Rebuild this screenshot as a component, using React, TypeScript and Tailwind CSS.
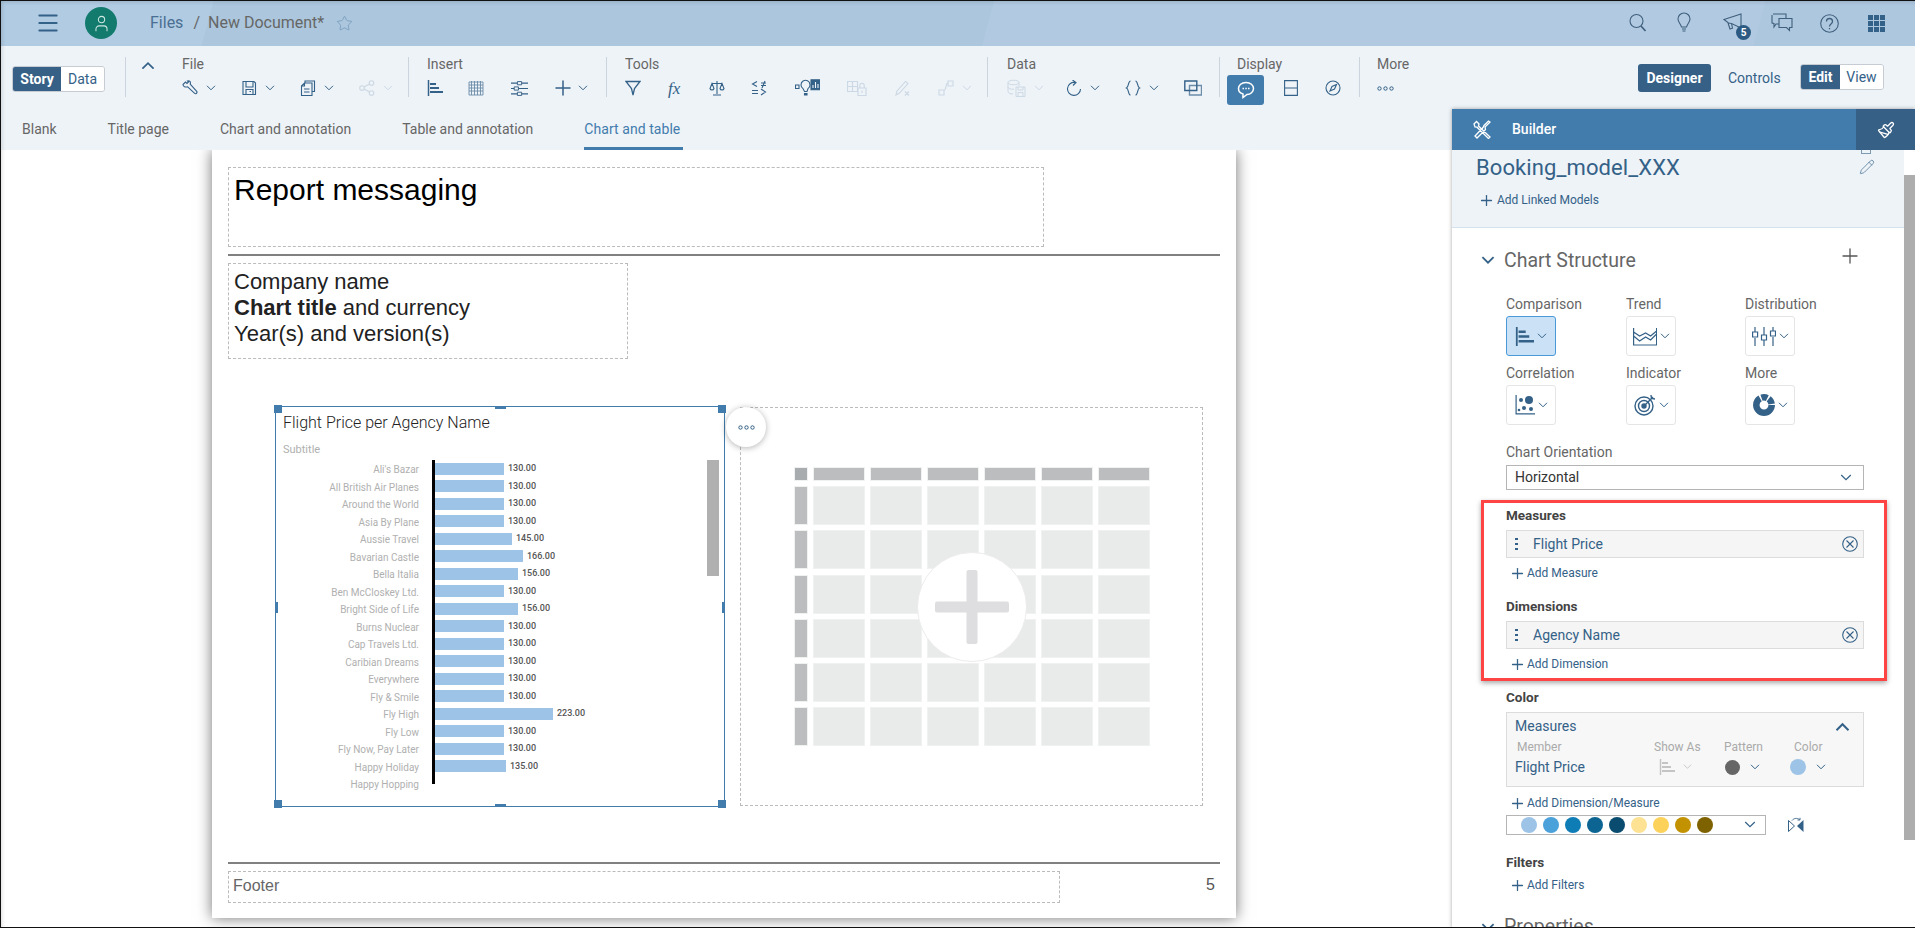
import type { ReactNode } from "react";
import { Menu, Paintbrush, Pencil, Plus, Star, User } from "lucide-react";

const bars = [
  { name: "Ali's Bazar", width: 69, value: "130.00" },
  { name: "All British Air Planes", width: 69, value: "130.00" },
  { name: "Around the World", width: 69, value: "130.00" },
  { name: "Asia By Plane", width: 69, value: "130.00" },
  { name: "Aussie Travel", width: 77, value: "145.00" },
  { name: "Bavarian Castle", width: 88, value: "166.00" },
  { name: "Bella Italia", width: 83, value: "156.00" },
  { name: "Ben McCloskey Ltd.", width: 69, value: "130.00" },
  { name: "Bright Side of Life", width: 83, value: "156.00" },
  { name: "Burns Nuclear", width: 69, value: "130.00" },
  { name: "Cap Travels Ltd.", width: 69, value: "130.00" },
  { name: "Caribian Dreams", width: 69, value: "130.00" },
  { name: "Everywhere", width: 69, value: "130.00" },
  { name: "Fly & Smile", width: 69, value: "130.00" },
  { name: "Fly High", width: 118, value: "223.00" },
  { name: "Fly Low", width: 69, value: "130.00" },
  { name: "Fly Now, Pay Later", width: 69, value: "130.00" },
  { name: "Happy Holiday", width: 71, value: "135.00" },
  { name: "Happy Hopping", width: 0, value: "" },
];

const palette = [
  "#9dc3e6",
  "#4ba1d9",
  "#0f7db5",
  "#0b6492",
  "#0a4c6f",
  "#fde293",
  "#fcd25a",
  "#c29200",
  "#7f6200",
];

const Svg = ({ size = 16, children }: { size?: number; children: ReactNode }) => (
  <svg
    width={size}
    height={size}
    viewBox="0 0 16 16"
    fill="none"
    stroke="currentColor"
    strokeWidth="1.1"
    className="shrink-0"
  >
    {children}
  </svg>
);

const Chev = ({ up = false, size = 10, weight = 1 }: { up?: boolean; size?: number; weight?: number }) => (
  <svg width={size} height={size * 0.6} viewBox="0 0 10 6" fill="none" stroke="currentColor" strokeWidth={weight} className="shrink-0">
    <path d={up ? "M1 5.5 5 1.5l4 4" : "M1 .8 5 4.8l4-4"} />
  </svg>
);

const Dots = () => (
  <svg width="17" height="5" viewBox="0 0 17 5" fill="none" stroke="currentColor" strokeWidth="1" className="shrink-0">
    <circle cx="2.500" cy="2.500" r="1.700" />
    <circle cx="8.500" cy="2.500" r="1.700" />
    <circle cx="14.500" cy="2.500" r="1.700" />
  </svg>
);

const BarIcon = ({ size = 16 }: { size?: number }) => (
  <Svg size={size}>
    <path d="M1.500 0v16" strokeWidth="1.500" />
    <path d="M3 4h6M3 8h9M3 12h14" strokeWidth="2" />
  </Svg>
);
const WrenchIcon = () => (
  <Svg>
    <path d="M1 4.500 3.500 2 5 3.500 6.500 2 5.500 1C7.500.2 9 2 8.200 4.200l6.500 7.200c.9 1.300-.8 3-2 2L5.600 6.800C3.500 7.500 1 6.500 1 4.500Z" />
  </Svg>
);
const SaveIcon = () => (
  <Svg>
    <path d="M2 1.500h11l1.500 1.500v11.500h-12.500zM5 1.500v5.500h7v-5.500M5 14.500v-5h7v5M8.500 11.500h1.500" />
  </Svg>
);
const CopyIcon = () => (
  <Svg>
    <path d="M5 3V1h9.500v10.500H12M1.500 6 4.500 3h7.500v12.500H1.500zM4.500 3v3h-3M4 9h5.500M4 12h5.500" />
  </Svg>
);
const ShareIcon = () => (
  <Svg>
    <circle cx="3" cy="8" r="2.300" />
    <circle cx="12.500" cy="3" r="2.300" />
    <circle cx="12.500" cy="13" r="2.300" />
    <path d="m5 7 5.500-3M5 9l5.500 3" />
  </Svg>
);
const TableIcon = () => (
  <span className="opacity-70">
    <Svg>
      <path d="M1 2h14v13H1zM1 5h14M1 8h14M1 11h14M3.500 1v14M6.500 1v14M9.500 1v14M12.500 1v14" strokeWidth=".9" />
    </Svg>
  </span>
);
const SlidersIcon = () => (
  <Svg size={17}>
    <path d="M0 3h6M10 3h6M0 8h3M7 8h9M0 13h6M10 13h6" />
    <path d="M6 1.500h4v3H6zM3 6.500h4v3H3zM6 11.500h4v3H6z" strokeWidth=".9" />
  </Svg>
);
const FunnelIcon = () => (
  <Svg>
    <path d="M1 1.500h14L9.500 8.500 8 15l-1.500-6.500z" strokeWidth="1.300" />
  </Svg>
);
const ScaleIcon = () => (
  <Svg>
    <path d="M8 1v13M4 15h8M3 3.500h10M3 3.500 1 8.500c.5 2 3.500 2 4 0zM13 3.500l-2 5c.5 2 3.500 2 4 0z" />
  </Svg>
);
const CompareIcon = () => (
  <Svg>
    <path d="M6 1.500 1.500 4 6 6.500M10 3h5M10 5.500h5M14 1l-3 7M1 10.500h6M1 13.500h6M10 9l4.500 3-4.500 3" />
  </Svg>
);
const BulbChartIcon = () => (
  <svg width="25" height="18" viewBox="0 0 25 18" fill="none" stroke="currentColor" strokeWidth="1.100" className="shrink-0">
    <path d="M0.500 6h3.500v3.500H0.500zM6 6a4.500 4.500 0 1 1 7 3.600L12 12.500H9.500L8 9.600A4.500 4.500 0 0 1 6 6Z" />
    <path d="M9.500 14.500h2.500v1.500H9.500z" fill="currentColor" />
    <path d="M16 .8h8.500v10H16z" fill="currentColor" />
    <path d="M18 9V6M20.500 9V3M23 9V5" stroke="#eef3f8" />
  </svg>
);
const LockTableIcon = () => (
  <svg width="20" height="16" viewBox="0 0 20 16" fill="none" stroke="currentColor" strokeWidth="1.100" className="shrink-0">
    <path d="M.5 1.500h10v10H.5zM.5 6.500h10M5.500 1.500v10" />
    <path d="M11 8h8v7.500h-8zM12.800 8V5.500a2.200 2.200 0 0 1 4.400 0V8" fill="#eef3f8" />
    <path d="M15 10.500v2.500" />
  </svg>
);
const PenXIcon = () => (
  <Svg>
    <path d="M1 15l1-4L10.500 1.500l2.500 2L4.500 13zM10 11.500l4 4M14 11.500l-4 4" />
  </Svg>
);
const LinkIcon = () => (
  <Svg>
    <path d="M1 10h5v5H1zM10 1h5v5h-5zM6 10c3 0 1-7 4-7" />
  </Svg>
);
const DbIcon = () => (
  <svg width="19" height="18" viewBox="0 0 19 18" fill="none" stroke="currentColor" strokeWidth="1" className="shrink-0">
    <path d="M1 3.500C1 .5 12 .5 12 3.500S1 6.500 1 3.500ZM1 3.500v9C1 14 3 15 6 15M12 3.500V7M1 8c0 1.500 3 2.400 6 2.200" />
    <path d="M9 8h9v9.500H9zM11 8v3h5V8M11 17.500v-4h5v4" />
  </svg>
);
const RefreshIcon = () => (
  <Svg>
    <path d="M9 2.500A6.500 6.500 0 1 0 14.500 9M6.500 0 10 2.500 7 5.500" />
  </Svg>
);
const BracesIcon = () => (
  <Svg>
    <path d="M5.500 1C3 1 4 7 1.500 8 4 9 3 15 5.500 15M10.500 1C13 1 12 7 14.500 8 12 9 13 15 10.500 15" />
  </Svg>
);
const OverlapIcon = () => (
  <svg width="18" height="16" viewBox="0 0 18 16" fill="none" stroke="currentColor" className="shrink-0">
    <path d="M.8 1h12v9.500H.8z" strokeWidth="1.400" />
    <path d="M5.500 5.500h12V15h-12z" strokeWidth="1.400" opacity=".7" />
  </svg>
);
const CommentIcon = () => (
  <svg width="18" height="18" viewBox="0 0 18 18" fill="none" stroke="currentColor" strokeWidth="1.500">
    <path d="M9 1.500c4.500 0 7.500 2.700 7.500 6S13.500 13.500 10 13.500L6 16.500v-3.500C3 12.200 1.500 10 1.500 7.500c0-3.300 3-6 7.500-6Z" />
    <path d="M5.500 7.500h1.500M8.300 7.500h1.500M11 7.500h1.500" strokeWidth="1.700" />
  </svg>
);
const SplitIcon = () => (
  <svg width="14" height="16" viewBox="0 0 14 16" fill="none" stroke="currentColor" strokeWidth="1.100" className="shrink-0">
    <path d="M.6.600h12.800v14.800H.6zM.6 8h12.800" />
  </svg>
);
const CompassIcon = () => (
  <Svg>
    <circle cx="8" cy="8" r="7" />
    <path d="m11.500 4.500-4.500 2-2 4.500 4.500-2z" />
  </Svg>
);
const SearchIcon = () => (
  <svg width="18" height="20" viewBox="0 0 18 20" fill="none" stroke="currentColor">
    <circle cx="7.500" cy="8" r="6.500" strokeWidth="1.100" />
    <path d="m12 13 4.500 5" strokeWidth="1.700" />
  </svg>
);
const BulbIcon = () => (
  <svg width="14" height="22" viewBox="0 0 14 22" fill="none" stroke="currentColor" strokeWidth="1.100">
    <path d="M7 1a6 6 0 0 0-6 6c0 3 2.500 4.500 3.500 8h5C10.500 11.500 13 10 13 7a6 6 0 0 0-6-6ZM5 17h4M5.500 19h3" />
  </svg>
);
const MegaphoneIcon = () => (
  <svg width="20" height="20" viewBox="0 0 20 20" fill="none" stroke="currentColor" strokeWidth="1.100">
    <path d="M1 6.500 18 1v14L8.500 10.500 5.500 10 1 6.500ZM5 10l2 6 2.500-.8-1-4.700" />
  </svg>
);
const ChatsIcon = () => (
  <svg width="22" height="20" viewBox="0 0 22 20" fill="none" stroke="currentColor" strokeWidth="1.100">
    <path d="M2 1h13v4M8.500 11H5l-2 3v-3.500L1 10V2M8 5.500h13v9h-2.500v3l-3-3H8z" />
  </svg>
);
const HelpIcon = () => (
  <svg width="19" height="19" viewBox="0 0 19 19" fill="none" stroke="currentColor" strokeWidth="1.100">
    <circle cx="9.500" cy="9.500" r="8.800" />
    <path d="M6.500 7.500c0-4 6-4 6 0 0 2.500-3 2.500-3 5M9.500 14v1.300" strokeWidth="1.300" />
  </svg>
);
const GridIcon = () => (
  <svg width="17" height="17" viewBox="0 0 17 17" fill="currentColor">
    <path d="M0 0h5v5H0zM6 0h5v5H6zM12 0h5v5h-5zM0 6h5v5H0zM6 6h5v5H6zM12 6h5v5h-5zM0 12h5v5H0zM6 12h5v5H6zM12 12h5v5h-5z" />
  </svg>
);
const ToolsIcon = () => (
  <svg width="18" height="19" viewBox="0 0 18 19" fill="none" stroke="currentColor" strokeWidth="1.300">
    <path d="M1 4 3.500 1.500 6 4l-.5 2L17 17l-1.500 1.500L4 7.200 2 7zM12 7 17 2l-1.500-1L11 5.500l-1 2-8 8.500 2 2 8.500-8.500z" />
  </svg>
);
const CircleXIcon = () => (
  <svg width="16" height="16" viewBox="0 0 16 16" fill="none" stroke="currentColor" strokeWidth="1.100">
    <circle cx="8" cy="8" r="7.300" />
    <path d="m4.500 4.500 7 7M11.500 4.500l-7 7" />
  </svg>
);
const DragDots = () => (
  <span className="flex flex-col gap-[2.500px] w-[3px]">
    <span className="w-[2.500px] h-[2.500px] bg-[#346187]" />
    <span className="w-[2.500px] h-[2.500px] bg-[#346187]" />
    <span className="w-[2.500px] h-[2.500px] bg-[#346187]" />
  </span>
);

const Tool = ({
  w,
  icon,
  chev = false,
  disabled = false,
}: {
  w: number;
  icon: ReactNode;
  chev?: boolean;
  disabled?: boolean;
}) => (
  <span
    className={`flex items-center gap-2 ${disabled ? "text-[#ccd8e3]" : "text-[#346187]"}`}
    style={{ width: w }}
  >
    {icon}
    {chev && <Chev />}
  </span>
);

const Section = ({
  label,
  pl,
  w,
  children,
}: {
  label: string;
  pl: number;
  w?: number;
  children: ReactNode;
}) => (
  <div className="h-10 border-l border-[#ccd5dd] shrink-0" style={{ paddingLeft: pl, width: w }}>
    <div className="h-[14px] leading-[14px] text-[14px] text-[#666]">{label}</div>
    <div className="flex items-center h-8 mt-px">{children}</div>
  </div>
);

const AddLink = ({ label }: { label: string }) => (
  <div className="flex items-center h-4 pl-[2.500px] gap-[1.500px] text-[12px] text-[#346187]">
    <Plus size={17} strokeWidth={1.800} className="shrink-0" />
    {label}
  </div>
);

const FieldRow = ({ label }: { label: string }) => (
  <div className="flex items-center h-7 mt-[7px] bg-[#f5f5f5] border border-[#dcdcdc] pl-[8px] pr-[5px] text-[14px] text-[#346187]">
    <DragDots />
    <span className="ml-[15px]">{label}</span>
    <span className="ml-auto">
      <CircleXIcon />
    </span>
  </div>
);

const ChartButton = ({ active = false, icon }: { active?: boolean; icon: ReactNode }) => (
  <div
    className={`flex items-center justify-center gap-[3px] w-[50px] h-10 rounded-[3px] border text-[#346187] ${
      active ? "bg-[#cbe1f5] border-[#4b9ad6]" : "bg-white border-[#e5e5e5]"
    }`}
  >
    {icon}
    <Chev />
  </div>
);

const Handle = ({ className }: { className: string }) => (
  <span className={`absolute bg-[#427cac] ${className}`} />
);

const MoreCircle = () => (
  <div className="absolute top-0 right-[-42px] z-10 w-10 h-10 rounded-full bg-white shadow-[0_1px_6px_rgba(0,0,0,0.3)] flex items-center justify-center text-[#346187]">
    <Dots />
  </div>
);

const Header = () => (
  <header className="h-[46px] shrink-0 flex items-center bg-[linear-gradient(105deg,#b0cbe2_0,#b0cbe2_206px,#abc6dd_207px,#abc6dd_960px,#b1cae1_961px,#b1cae1_1705px,#adc7de_1706px)] text-[#346187]">
    <div className="ml-[35px] w-[26px]">
      <Menu size={26} strokeWidth={1.800} />
    </div>
    <div className="ml-[24px] w-8 h-8 rounded-full bg-[#137b6e] text-[#cfe8e2] flex items-center justify-center">
      <User size={19} strokeWidth={1.300} />
    </div>
    <span className="ml-[33px] text-[16px] text-[#4a6f92]">Files</span>
    <span className="ml-[10px] text-[16px] text-[#666]">/</span>
    <span className="ml-[8px] text-[16px] text-[#666]">New Document*</span>
    <span className="ml-[12px] text-[#6d93b5]">
      <Star size={17} strokeWidth={1} />
    </span>
    <div className="ml-auto flex items-center mr-[30px] text-[#3f5f7d]">
      <span className="w-[48px]">
        <SearchIcon />
      </span>
      <span className="w-[46px]">
        <BulbIcon />
      </span>
      <span className="relative w-[48px]">
        <MegaphoneIcon />
        <span className="absolute left-[13px] top-[12px] w-[15px] h-[15px] rounded-full bg-[#2c5a82] text-white text-[10px] font-bold flex items-center justify-center">
          5
        </span>
      </span>
      <span className="w-[49px]">
        <ChatsIcon />
      </span>
      <span className="w-[48px]">
        <HelpIcon />
      </span>
      <span className="text-[#346187]">
        <GridIcon />
      </span>
    </div>
  </header>
);

const Toolbar = () => (
  <div className="h-[104px] shrink-0 bg-[#eef3f8] flex flex-col relative z-10">
    <div className="flex pt-[11px] pl-3 h-[72px]">
      <div className="flex w-[93px] h-[26px] mt-[9px] rounded-[3px] border border-[#c6ccd2] overflow-hidden text-[14px] mr-5">
        <span className="w-[48px] bg-[#376087] text-white font-bold flex items-center justify-center">Story</span>
        <span className="flex-1 bg-white text-[#346187] flex items-center justify-center">Data</span>
      </div>
      <div className="h-10 border-l border-[#ccd5dd] flex w-[283px] shrink-0">
        <span className="ml-[15px] w-[41px] mt-[4px] text-[#346187]">
          <Chev up size={14} weight={1.200} />
        </span>
        <div>
          <div className="h-[14px] leading-[14px] text-[14px] text-[#666]">File</div>
          <div className="flex items-center h-8 mt-px">
            <Tool w={59} icon={<WrenchIcon />} chev />
            <Tool w={59} icon={<SaveIcon />} chev />
            <Tool w={59} icon={<CopyIcon />} chev />
            <Tool w={40} icon={<ShareIcon />} chev disabled />
          </div>
        </div>
      </div>
      <Section label="Insert" pl={18} w={198}>
        <Tool w={41} icon={<BarIcon />} />
        <Tool w={43} icon={<TableIcon />} />
        <Tool w={45} icon={<SlidersIcon />} />
        <Tool
          w={40}
          icon={
            <span className="-mx-[5px]">
              <Plus size={24} strokeWidth={1.500} />
            </span>
          }
          chev
        />
      </Section>
      <Section label="Tools" pl={18} w={381}>
        <Tool w={43} icon={<FunnelIcon />} />
        <Tool
          w={41}
          icon={<span className="font-['Liberation_Serif',serif] italic text-[17px] leading-none w-[16px]">fx</span>}
        />
        <Tool w={42} icon={<ScaleIcon />} />
        <Tool w={44} icon={<CompareIcon />} />
        <Tool w={52} icon={<BulbChartIcon />} />
        <Tool w={48} icon={<LockTableIcon />} disabled />
        <Tool w={43} icon={<PenXIcon />} disabled />
        <Tool w={40} icon={<LinkIcon />} chev disabled />
      </Section>
      <Section label="Data" pl={19} w={232}>
        <Tool w={59} icon={<DbIcon />} chev disabled />
        <Tool w={59} icon={<RefreshIcon />} chev />
        <Tool w={59} icon={<BracesIcon />} chev />
        <Tool w={30} icon={<OverlapIcon />} />
      </Section>
      <Section label="Display" pl={17} w={140}>
        <span className="-ml-[10px] mr-[20px] w-[37px] h-[30px] mt-[3px] rounded-[3px] bg-[#427cac] text-white flex items-center justify-center shrink-0">
          <CommentIcon />
        </span>
        <Tool w={41} icon={<SplitIcon />} />
        <Tool w={20} icon={<CompassIcon />} />
      </Section>
      <Section label="More" pl={17}>
        <Tool w={20} icon={<Dots />} />
      </Section>
      <div className="ml-auto flex items-start pr-[31px] mt-[7px]">
        <span className="w-[73px] h-[28px] rounded-[3px] bg-[#376087] text-white text-[14px] font-bold flex items-center justify-center">
          Designer
        </span>
        <span className="ml-[17px] w-[54px] h-[28px] text-[14px] text-[#346187] flex items-center">Controls</span>
        <span className="ml-[18px] flex w-[84px] h-[26px] rounded-[3px] border border-[#c6ccd2] overflow-hidden text-[14px]">
          <span className="w-[39px] bg-[#376087] text-white font-bold flex items-center justify-center">Edit</span>
          <span className="flex-1 bg-white text-[#346187] flex items-center justify-center">View</span>
        </span>
      </div>
    </div>
    <div className="flex gap-[51px] pl-[22px] h-8 text-[14px] leading-[22px] text-[#666]">
      <span>Blank</span>
      <span>Title page</span>
      <span>Chart and annotation</span>
      <span>Table and annotation</span>
      <span className="text-[#427cac] border-b-[3px] border-[#427cac] pr-[3px] tracking-[0.06px]">Chart and table</span>
    </div>
  </div>
);

const BarChart = () => (
  <div className="relative w-[450px] h-[401px] shrink-0 ml-[47px] border border-[#427cac] font-[Roboto,sans-serif]">
    <Handle className="-left-[2px] -top-[2px] w-2 h-2" />
    <Handle className="-right-[2px] -top-[2px] w-2 h-2" />
    <Handle className="-left-[2px] -bottom-[2px] w-2 h-2" />
    <Handle className="-right-[2px] -bottom-[2px] w-2 h-2" />
    <Handle className="left-[219px] -top-[1px] w-[11px] h-[3px]" />
    <Handle className="left-[219px] -bottom-[1px] w-[11px] h-[3px]" />
    <Handle className="-left-[1px] top-[195px] w-[3px] h-[11px]" />
    <Handle className="-right-[1px] top-[195px] w-[3px] h-[11px]" />
    <MoreCircle />
    <div className="pl-[7px] mt-[6px] h-5 leading-5 text-[16px] font-light text-[#222]">Flight Price per Agency Name</div>
    <div className="pl-[7px] mt-[10px] h-[14px] leading-[14px] text-[11px] text-[#b0b0b0]">Subtitle</div>
    <div className="flex mt-[3px] pl-[7px] pr-[5px]">
      <div className="w-[136px] mr-[13px] pt-px shrink-0">
        {bars.map((bar) => (
          <div key={bar.name} className="h-[17.5px] leading-[17.5px] text-right text-[10px] text-[#b0b0b0] whitespace-nowrap">
            {bar.name}
          </div>
        ))}
      </div>
      <div className="w-[260px] h-[324px] border-l-[3px] border-black">
        {bars.slice(0, 18).map((bar) => (
          <div key={bar.name} className="h-[17.5px] flex items-center">
            <span className="h-3 bg-[#9dc3e6]" style={{ width: bar.width }} />
            <span className="ml-1 text-[9px] font-medium text-[#555]">{bar.value}</span>
          </div>
        ))}
      </div>
      <div className="ml-auto w-3 h-[116px] bg-[#b0b0b0]" />
    </div>
  </div>
);

const TablePlaceholder = () => (
  <div className="relative ml-[15px] mt-px w-[463px] h-[399px] shrink-0 border border-dashed border-[#bbb] flex items-center justify-center">
    <div className="grid grid-cols-[14px_repeat(6,52px)] grid-rows-[14px_repeat(6,39px)] gap-x-[5px] gap-y-[5.330px]">
      {Array.from({ length: 49 }).map((_, i) => (
        <span
          key={i}
          className={`border border-[#f0f1f1] ${i === 0 ? "bg-[#a8acaf]" : i < 7 || i % 7 === 0 ? "bg-[#bcbdbe]" : "bg-[#e9eaea]"}`}
        />
      ))}
    </div>
    <div className="absolute left-[176px] top-[144px] w-[110px] h-[110px] rounded-full bg-white border border-[#ececec] flex items-center justify-center text-[#dedee0]">
      <svg width="74" height="74" viewBox="0 0 74 74" fill="currentColor">
        <rect x="31.500" y="0" width="11" height="74" rx="2" />
        <rect x="0" y="31.500" width="74" height="11" rx="2" />
      </svg>
    </div>
  </div>
);

const ReportPage = () => (
  <div className="ml-[212px] w-[1024px] h-[768px] shrink-0 bg-white shadow-[0_0_14px_rgba(0,0,0,0.55)] pl-4 pr-4 font-['Liberation_Sans',Arial,sans-serif]">
    <div className="mt-[17px] w-[816px] h-[80px] border border-dashed border-[#bbb] pl-[5px] pt-[4px] text-[30px] leading-[36px] text-black">
      Report messaging
    </div>
    <div className="mt-[7px] h-[2px] bg-[#808080]" />
    <div className="mt-[7px] w-[400px] h-[96px] border border-dashed border-[#bbb] pl-[5px] pt-[5px] text-[22px] leading-[26px] text-[#222]">
      <div>Company name</div>
      <div>
        <b>Chart title</b> and currency
      </div>
      <div>Year(s) and version(s)</div>
    </div>
    <div className="flex items-start mt-[47px]">
      <BarChart />
      <TablePlaceholder />
    </div>
    <div className="mt-[55px] h-[2px] bg-[#808080]" />
    <div className="flex mt-[7px]">
      <div className="w-[832px] h-8 border border-dashed border-[#bbb] pl-[4px] text-[16px] leading-[28px] text-[#666]">
        Footer
      </div>
      <span className="ml-auto mr-[5px] text-[16px] leading-[28px] text-[#555]">5</span>
    </div>
  </div>
);

const BuilderPanel = () => (
  <aside className="relative z-20 -mt-[41px] w-[463px] shrink-0 flex flex-col bg-white shadow-[0_0_4px_rgba(0,0,0,0.35)] h-[819px] overflow-hidden">
    <div className="h-[41px] shrink-0 bg-[#427cac] flex items-center text-white">
      <span className="ml-[21px]">
        <ToolsIcon />
      </span>
      <span className="ml-[21px] text-[14px] font-medium">Builder</span>
      <span className="ml-auto w-[59px] h-full bg-[#376087] flex items-center justify-center">
        <Paintbrush size={18} strokeWidth={1.700} />
      </span>
    </div>
    <div className="flex flex-1 min-h-0">
      <div className="w-[452px] shrink-0">
        <div className="h-[78px] bg-[#eef3f8] border-b border-[#d5e2ee] pl-6 relative">
          <span className="absolute left-[409px] top-0 w-[10px] h-[4px] border-x border-b border-[#7d9ab5]" />
          <div className="flex items-center pt-[4px] h-[30px]">
            <span className="text-[22px] text-[#346187] tracking-[0.1px]">Booking_model_XXX</span>
            <span className="ml-auto mr-[29px] text-[#346187]">
              <Pencil size={16} strokeWidth={1} />
            </span>
          </div>
          <div className="mt-[12px]">
            <div className="flex items-center h-4 gap-[2.500px] pl-[1.500px] text-[12px] text-[#346187]">
              <Plus size={17} strokeWidth={1.800} className="shrink-0" />
              Add Linked Models
            </div>
          </div>
        </div>
        <div className="relative">
          <div className="mt-[20px] h-6 flex items-center pl-[29px] text-[#346187]">
            <Chev size={14} weight={1.300} />
            <span className="ml-[9px] pt-px text-[19.500px] text-[#666]">Chart Structure</span>
            <span className="ml-auto mr-[42px] -mt-[8px] text-[#555]">
              <Plus size={24} strokeWidth={1.300} />
            </span>
          </div>
          <div className="ml-[54px] w-[358px] text-[14px] text-[#666]">
            <div className="grid grid-cols-[120px_119px_1fr] mt-[24px]">
              <div className="h-4 leading-4">Comparison</div>
              <div className="h-4 leading-4">Trend</div>
              <div className="h-4 leading-4">Distribution</div>
              <div className="mt-[4px]">
                <ChartButton active icon={<BarIcon size={19} />} />
              </div>
              <div className="mt-[4px]">
                <ChartButton
                  icon={
                    <svg width="24" height="19" viewBox="0 0 24 19" fill="none" stroke="currentColor" strokeWidth="1.200">
                      <path d="M.6 1v17h23V1M.6 5l6 4 6-3 5 3 6-5M.6 9l6 5 6-4 5 3 6-6" />
                    </svg>
                  }
                />
              </div>
              <div className="mt-[4px]">
                <ChartButton
                  icon={
                    <svg width="24" height="19" viewBox="0 0 24 19" fill="none" stroke="currentColor" strokeWidth="1.200">
                      <path d="M3 0v5M3 11v8M12 0v8M12 13v6M21 0v4M21 10v9M.6 5h5v5h-5zM9.500 8h5v5h-5zM18.500 4h5v5h-5z" />
                    </svg>
                  }
                />
              </div>
              <div className="h-4 leading-4 mt-[9px]">Correlation</div>
              <div className="h-4 leading-4 mt-[9px]">Indicator</div>
              <div className="h-4 leading-4 mt-[9px]">More</div>
              <div className="mt-[4px]">
                <ChartButton
                  icon={
                    <svg width="20" height="20" viewBox="0 0 20 20" fill="currentColor">
                      <path d="M.5 0v19.500H20v-1.200H1.700V0z" />
                      <circle cx="14" cy="5" r="4" />
                      <circle cx="6" cy="5" r="2" />
                      <circle cx="9" cy="13" r="2" />
                      <circle cx="16" cy="14" r="2" />
                      <circle cx="4" cy="15" r="1.300" />
                    </svg>
                  }
                />
              </div>
              <div className="mt-[4px]">
                <ChartButton
                  icon={
                    <svg width="22" height="22" viewBox="0 0 22 22" fill="none" stroke="currentColor" strokeWidth="1.400">
                      <circle cx="10" cy="12" r="9" />
                      <circle cx="10" cy="12" r="5.500" />
                      <circle cx="10" cy="12" r="2" fill="currentColor" />
                      <path d="m10 12 9-9M17 1l.5 3.500L21 5" />
                    </svg>
                  }
                />
              </div>
              <div className="mt-[4px]">
                <ChartButton
                  icon={
                    <svg width="22" height="22" viewBox="0 0 22 22" fill="none" stroke="currentColor" strokeWidth="6.500">
                      <circle cx="11" cy="11" r="7.700" strokeDasharray="32 1.500 6 1.500 6 1.500" />
                    </svg>
                  }
                />
              </div>
            </div>
            <div className="mt-[19px] h-4 leading-4">Chart Orientation</div>
            <div className="mt-[5px] h-[25px] border border-[#b5b5b5] bg-white flex items-center pl-2 pr-[11px] text-[#333]">
              Horizontal
              <span className="ml-auto text-[#346187]">
                <Chev size={12} />
              </span>
            </div>
            <div className="mt-[17px] h-4 leading-4 text-[13.500px] font-bold text-[#444]">Measures</div>
            <FieldRow label="Flight Price" />
            <div className="mt-[7px]">
              <AddLink label="Add Measure" />
            </div>
            <div className="mt-[17px] h-4 leading-4 text-[13.500px] font-bold text-[#444]">Dimensions</div>
            <FieldRow label="Agency Name" />
            <div className="mt-[7px]">
              <AddLink label="Add Dimension" />
            </div>
            <div className="mt-[17px] h-4 leading-4 text-[13.500px] font-bold text-[#444]">Color</div>
            <div className="mt-[7px] h-[75px] bg-[#f7f7f7] border border-[#dcdcdc] px-2 text-[#346187]">
              <div className="flex items-center h-[26px]">
                <span>Measures</span>
                <span className="ml-auto mr-[5px]">
                  <Chev up size={15} weight={1.300} />
                </span>
              </div>
              <div className="grid grid-cols-[137px_70px_70px_1fr] pl-[2px] text-[12px] text-[#aaa] leading-[17px]">
                <span>Member</span>
                <span>Show As</span>
                <span>Pattern</span>
                <span>Color</span>
              </div>
              <div className="grid grid-cols-[137px_70px_70px_1fr] h-[22px] items-center">
                <span>Flight Price</span>
                <span className="flex items-center gap-[8px] pl-[7px] text-[#c4c4c4]">
                  <BarIcon />
                  <Chev size={9} />
                </span>
                <span className="flex items-center gap-[10px] pl-[3px]">
                  <span className="w-[15px] h-[15px] rounded-full bg-[#666]" />
                  <Chev size={10} />
                </span>
                <span className="flex items-center gap-[10px] -ml-[2px]">
                  <span className="w-4 h-4 rounded-full bg-[#9dc3e6]" />
                  <Chev size={10} />
                </span>
              </div>
            </div>
            <div className="mt-[8px]">
              <AddLink label="Add Dimension/Measure" />
            </div>
            <div className="flex items-center mt-[4px]">
              <div className="flex items-center w-[260px] h-5 border border-[#b5b5b5] pl-[14px] pr-[9px] gap-[6px]">
                {palette.map((color) => (
                  <span key={color} className="w-4 h-4 rounded-full" style={{ backgroundColor: color }} />
                ))}
                <span className="ml-auto text-[#346187]">
                  <Chev size={12} />
                </span>
              </div>
              <span className="ml-[22px] text-[#346187]">
                <svg width="16" height="16" viewBox="0 0 16 16" fill="currentColor">
                  <path d="M15.500 3v12L9 9z" />
                  <path d="M.5 3.500v11l6-5.500z" fill="none" stroke="currentColor" />
                  <path d="M4 3.500C6 1 9 .8 11.500 2.500M9.500 3h2.500V.8" fill="none" stroke="currentColor" strokeWidth=".9" />
                </svg>
              </span>
            </div>
            <div className="mt-[19px] h-4 leading-4 text-[13.500px] font-bold text-[#444]">Filters</div>
            <div className="mt-[7px]">
              <AddLink label="Add Filters" />
            </div>
          </div>
          <div className="mt-[22px] h-6 flex items-center pl-[29px] text-[#346187]">
            <Chev size={14} weight={1.300} />
            <span className="ml-[9px] text-[19.500px] text-[#666]">Properties</span>
          </div>
          <div className="absolute left-[29px] top-[252px] w-[406px] h-[181px] border-[3px] border-[#ff4444] shadow-[0_2px_5px_rgba(0,0,0,0.35)]" />
        </div>
      </div>
      <div className="flex-1 pt-[25px]">
        <div className="h-[665px] bg-[#adadad]" />
      </div>
    </div>
  </aside>
);

export default function App() {
  return (
    <div className="relative w-full h-[928px] overflow-hidden bg-white flex flex-col font-[Roboto,sans-serif]">
      <Header />
      <Toolbar />
      <main className="flex flex-1 min-h-0 justify-between">
        <ReportPage />
        <BuilderPanel />
      </main>
      {/* screenshot frame: dark hairline with a soft inner shade */}
      <div className="absolute inset-0 z-30 pointer-events-none shadow-[inset_1px_1px_0_#111,inset_0_-1px_0_#111,inset_5px_5px_5px_-4px_rgba(0,0,0,0.2)]" />
    </div>
  );
}
